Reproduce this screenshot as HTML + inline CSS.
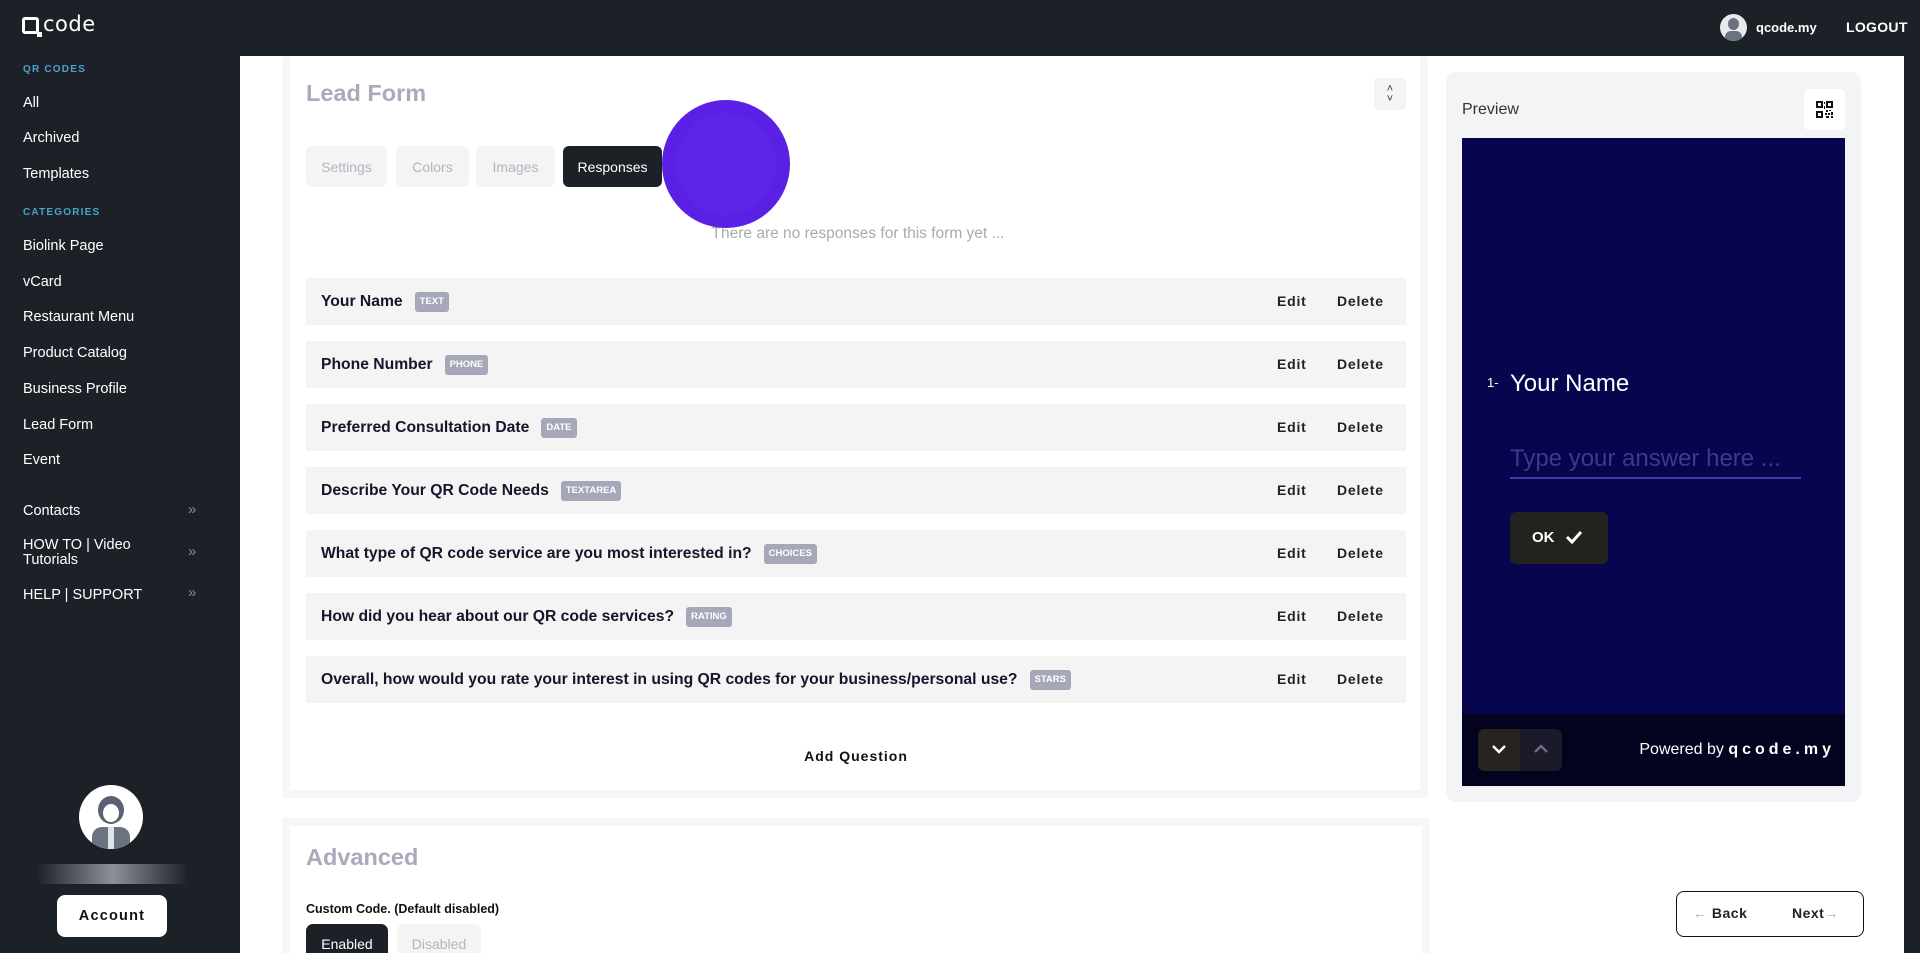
<!DOCTYPE html>
<html><head><meta charset="utf-8"><style>
*{box-sizing:border-box;margin:0;padding:0}
html{width:1920px;height:953px;overflow:hidden}
body{width:1920px;height:953px;overflow:hidden;background:#fff;font-family:"Liberation Sans",sans-serif;position:relative}
.a{position:absolute}
#hdr{left:0;top:0;width:1920px;height:56px;background:#1c2128}
#side{left:0;top:0;width:240px;height:953px;background:#1c2128}
#strip{left:1904px;top:0;width:16px;height:953px;background:#1c2128}
.sec{color:#4aa3c8;font-size:10px;font-weight:bold;letter-spacing:1.2px;left:23px}
.it{color:#fff;font-size:14.5px;left:23px}
.chev{color:#8a8f96;font-size:15px;left:188px}
.card{background:#fff;border:8px solid #f6f6f6;border-radius:4px}
.tab{top:146px;height:41px;border-radius:6px;background:#f4f4f5;color:#b3b4bf;font-size:14px;text-align:center;line-height:43px}
.row{left:306px;width:1100px;height:47px;background:#f4f4f5}
.row .q{position:absolute;left:15px;top:0;line-height:47px;font-size:15.7px;font-weight:bold;color:#15152b;white-space:nowrap}
.bd{display:inline-block;background:#a6a7b9;color:#fff;font-size:9.5px;font-weight:bold;padding:4px 5px;border-radius:3px;margin-left:12px;vertical-align:2px;line-height:12px}
.row .e{position:absolute;left:971px;top:0;line-height:47px;font-size:14px;font-weight:bold;color:#222;letter-spacing:.8px}
.row .d{position:absolute;left:1031px;top:0;line-height:47px;font-size:14px;font-weight:bold;color:#222;letter-spacing:.8px}
</style></head><body>
<div id="hdr" class="a"></div>
<div id="side" class="a"></div>
<div id="strip" class="a"></div>

<!-- logo -->
<div class="a" style="left:22px;top:17px;width:17px;height:17px;border:3px solid #fff;border-radius:3px"></div>
<div class="a" style="left:37px;top:32px;width:5px;height:5px;background:#fff"></div>
<div class="a" style="left:43px;top:12px;color:#fff;font-size:21px;letter-spacing:0.5px;font-family:'DejaVu Sans',sans-serif">code</div>

<div class="a sec" style="top:64px">QR CODES</div>
<div class="a it" style="top:95px">All</div>
<div class="a it" style="top:130px">Archived</div>
<div class="a it" style="top:166px">Templates</div>
<div class="a sec" style="top:207px">CATEGORIES</div>
<div class="a it" style="top:238px">Biolink Page</div>
<div class="a it" style="top:274px">vCard</div>
<div class="a it" style="top:309px">Restaurant Menu</div>
<div class="a it" style="top:345px">Product Catalog</div>
<div class="a it" style="top:381px">Business Profile</div>
<div class="a it" style="top:417px">Lead Form</div>
<div class="a it" style="top:452px">Event</div>
<div class="a it" style="top:503px">Contacts</div>
<div class="a chev" style="top:501px">»</div>
<div class="a it" style="top:538px;line-height:15px">HOW TO | Video<br>Tutorials</div>
<div class="a chev" style="top:543px">»</div>
<div class="a it" style="top:587px">HELP | SUPPORT</div>
<div class="a chev" style="top:584px">»</div>

<!-- sidebar avatar -->
<div class="a" style="left:79px;top:785px;width:64px;height:64px;border-radius:50%;background:#fff;overflow:hidden">
<div class="a" style="left:19px;top:11px;width:26px;height:28px;border-radius:50%;background:#5a6170"></div>
<div class="a" style="left:22px;top:17px;width:20px;height:22px;border-radius:50%;background:#fff;border:2px solid #5a6170"></div>
<div class="a" style="left:13px;top:42px;width:38px;height:24px;border-radius:10px 10px 0 0;background:#6b7280"></div>
<div class="a" style="left:29px;top:42px;width:6px;height:22px;background:#dfe3e8"></div>
</div>
<div class="a" style="left:37px;top:864px;width:151px;height:20px;background:linear-gradient(90deg,rgba(28,33,40,1),#8c9099 50%,rgba(28,33,40,1))"></div>
<div class="a" style="left:57px;top:895px;width:110px;height:42px;background:#fff;border-radius:8px;text-align:center;line-height:42px;font-weight:bold;font-size:14.5px;letter-spacing:1.2px;color:#111">Account</div>

<!-- header right -->
<div class="a" style="left:1720px;top:14px;width:27px;height:27px;border-radius:50%;background:#e8e9ec;overflow:hidden">
<div class="a" style="left:8px;top:4px;width:11px;height:12px;border-radius:50%;background:#6b7280"></div>
<div class="a" style="left:5px;top:17px;width:17px;height:12px;border-radius:6px 6px 0 0;background:#6b7280"></div></div>
<div class="a" style="left:1756px;top:20px;color:#fff;font-weight:bold;font-size:13px">qcode.my</div>
<div class="a" style="left:1846px;top:19px;color:#fff;font-weight:bold;font-size:14px;letter-spacing:.3px">LOGOUT</div>

<!-- Lead form card -->
<div class="a card" style="left:282px;top:56px;width:1146px;height:742px;border-top:none"></div>
<div class="a" style="left:306px;top:80px;font-size:23.5px;font-weight:bold;color:#a9aabb">Lead Form</div>
<div class="a" style="left:1374px;top:78px;width:32px;height:32px;background:#f4f4f5;border-radius:4px;text-align:center;color:#333;font-size:11px;line-height:10px;padding-top:6px">˄<br>˅</div>

<div class="a tab" style="left:306px;width:81px">Settings</div>
<div class="a tab" style="left:396px;width:73px">Colors</div>
<div class="a tab" style="left:476px;width:79px">Images</div>
<div class="a tab" style="left:563px;width:99px;background:#1c2128;color:#fff">Responses</div>
<div class="a" style="left:578px;top:225px;width:560px;text-align:center;color:#aaa;font-size:15.5px">There are no responses for this form yet ...</div>
<div class="a" style="left:662px;top:100px;width:128px;height:128px;border-radius:50%;background:#5b20e6"></div>
<div class="a" style="left:676px;top:113px;width:100px;height:102px;border-radius:50%;background:#5e24e8"></div>

<div class="a row" style="top:278px"><div class="q">Your Name<span class="bd">TEXT</span></div><div class="e">Edit</div><div class="d">Delete</div></div>
<div class="a row" style="top:341px"><div class="q">Phone Number<span class="bd">PHONE</span></div><div class="e">Edit</div><div class="d">Delete</div></div>
<div class="a row" style="top:404px"><div class="q">Preferred Consultation Date<span class="bd">DATE</span></div><div class="e">Edit</div><div class="d">Delete</div></div>
<div class="a row" style="top:467px"><div class="q">Describe Your QR Code Needs<span class="bd">TEXTAREA</span></div><div class="e">Edit</div><div class="d">Delete</div></div>
<div class="a row" style="top:530px"><div class="q">What type of QR code service are you most interested in?<span class="bd">CHOICES</span></div><div class="e">Edit</div><div class="d">Delete</div></div>
<div class="a row" style="top:593px"><div class="q">How did you hear about our QR code services?<span class="bd">RATING</span></div><div class="e">Edit</div><div class="d">Delete</div></div>
<div class="a row" style="top:656px"><div class="q">Overall, how would you rate your interest in using QR codes for your business/personal use?<span class="bd">STARS</span></div><div class="e">Edit</div><div class="d">Delete</div></div>

<div class="a" style="left:700px;top:748px;width:312px;text-align:center;font-weight:bold;font-size:14px;letter-spacing:1px;color:#111">Add Question</div>

<!-- Advanced card -->
<div class="a card" style="left:282px;top:818px;width:1148px;height:150px;border-bottom:none"></div>
<div class="a" style="left:306px;top:844px;font-size:23.5px;font-weight:bold;color:#a9aabb">Advanced</div>
<div class="a" style="left:306px;top:902px;font-size:12.5px;font-weight:bold;color:#111">Custom Code. (Default disabled)</div>
<div class="a" style="left:306px;top:924px;width:82px;height:40px;background:#1c2128;border-radius:7px;color:#fff;font-size:14px;text-align:center;line-height:40px">Enabled</div>
<div class="a" style="left:397px;top:924px;width:84px;height:40px;background:#f4f4f5;border-radius:7px;color:#b3b4bf;font-size:14px;text-align:center;line-height:40px">Disabled</div>

<!-- Preview -->
<div class="a" style="left:1446px;top:72px;width:415px;height:730px;background:#f3f4f5;border-radius:10px"></div>
<div class="a" style="left:1462px;top:101px;font-size:16px;color:#333">Preview</div>
<div class="a" style="left:1804px;top:89px;width:41px;height:41px;background:#fff;border-radius:5px">
<svg class="a" style="left:12px;top:12px" width="17" height="17" viewBox="0 0 17 17" fill="#111"><path d="M0 0h7v7H0zM2 2v3h3V2zM10 0h7v7h-7zM12 2v3h3V2zM0 10h7v7H0zM2 12v3h3v-3zM8 1h1v2H8zM8 5h1v3H8zM10 9h2v2h-2zM13 9h2v1h-2zM9 12h2v2H9zM12 12h2v2h-2zM15 11h2v3h-2zM10 15h3v2h-3zM15 15h2v2h-2z"/></svg></div>
<div class="a" style="left:1462px;top:138px;width:383px;height:648px;background:#06054e"></div>
<div class="a" style="left:1462px;top:714px;width:383px;height:72px;background:#04031f"></div>
<div class="a" style="left:1487px;top:375px;color:#fff;font-size:13px">1-</div>
<div class="a" style="left:1510px;top:370px;color:#fff;font-size:24px">Your Name</div>
<div class="a" style="left:1510px;top:445px;color:#3a3a8e;font-size:24px">Type your answer here ...</div>
<div class="a" style="left:1510px;top:477px;width:291px;height:2px;background:#3d3da4"></div>
<div class="a" style="left:1510px;top:512px;width:98px;height:52px;background:#24221f;border-radius:6px;color:#fff;font-weight:bold;font-size:15px;line-height:52px;padding-left:22px">OK
<svg style="vertical-align:-2px;margin-left:6px" width="18" height="14" viewBox="0 0 18 14"><path d="M2 7l5 5 9-10" stroke="#fff" stroke-width="3" fill="none"/></svg></div>
<div class="a" style="left:1478px;top:729px;width:42px;height:42px;background:#262320;border-radius:6px 0 0 6px"></div>
<div class="a" style="left:1520px;top:729px;width:42px;height:42px;background:#1b1a2b;border-radius:0 6px 6px 0"></div>
<svg class="a" style="left:1491px;top:743px" width="16" height="12"><path d="M2 3l6 6 6-6" stroke="#fff" stroke-width="2.5" fill="none"/></svg>
<svg class="a" style="left:1533px;top:743px" width="16" height="12"><path d="M2 9l6-6 6 6" stroke="#6b6b80" stroke-width="2.5" fill="none"/></svg>
<div class="a" style="left:1600px;top:741px;width:231px;text-align:right;color:#fff;font-size:16px;white-space:nowrap">Powered by <b style="letter-spacing:4px;margin-right:-4px">qcode.my</b></div>

<!-- Back/Next -->
<div class="a" style="left:1676px;top:891px;width:188px;height:46px;border:1.5px solid #111;border-radius:8px"></div>
<div class="a" style="left:1693px;top:905px;font-size:14px;font-weight:bold;color:#222;letter-spacing:.5px"><span style="color:#aaa;font-weight:normal">←</span> Back</div>
<div class="a" style="left:1792px;top:905px;font-size:14px;font-weight:bold;color:#222;letter-spacing:.5px">Next<span style="color:#aaa;font-weight:normal">→</span></div>
</body></html>
